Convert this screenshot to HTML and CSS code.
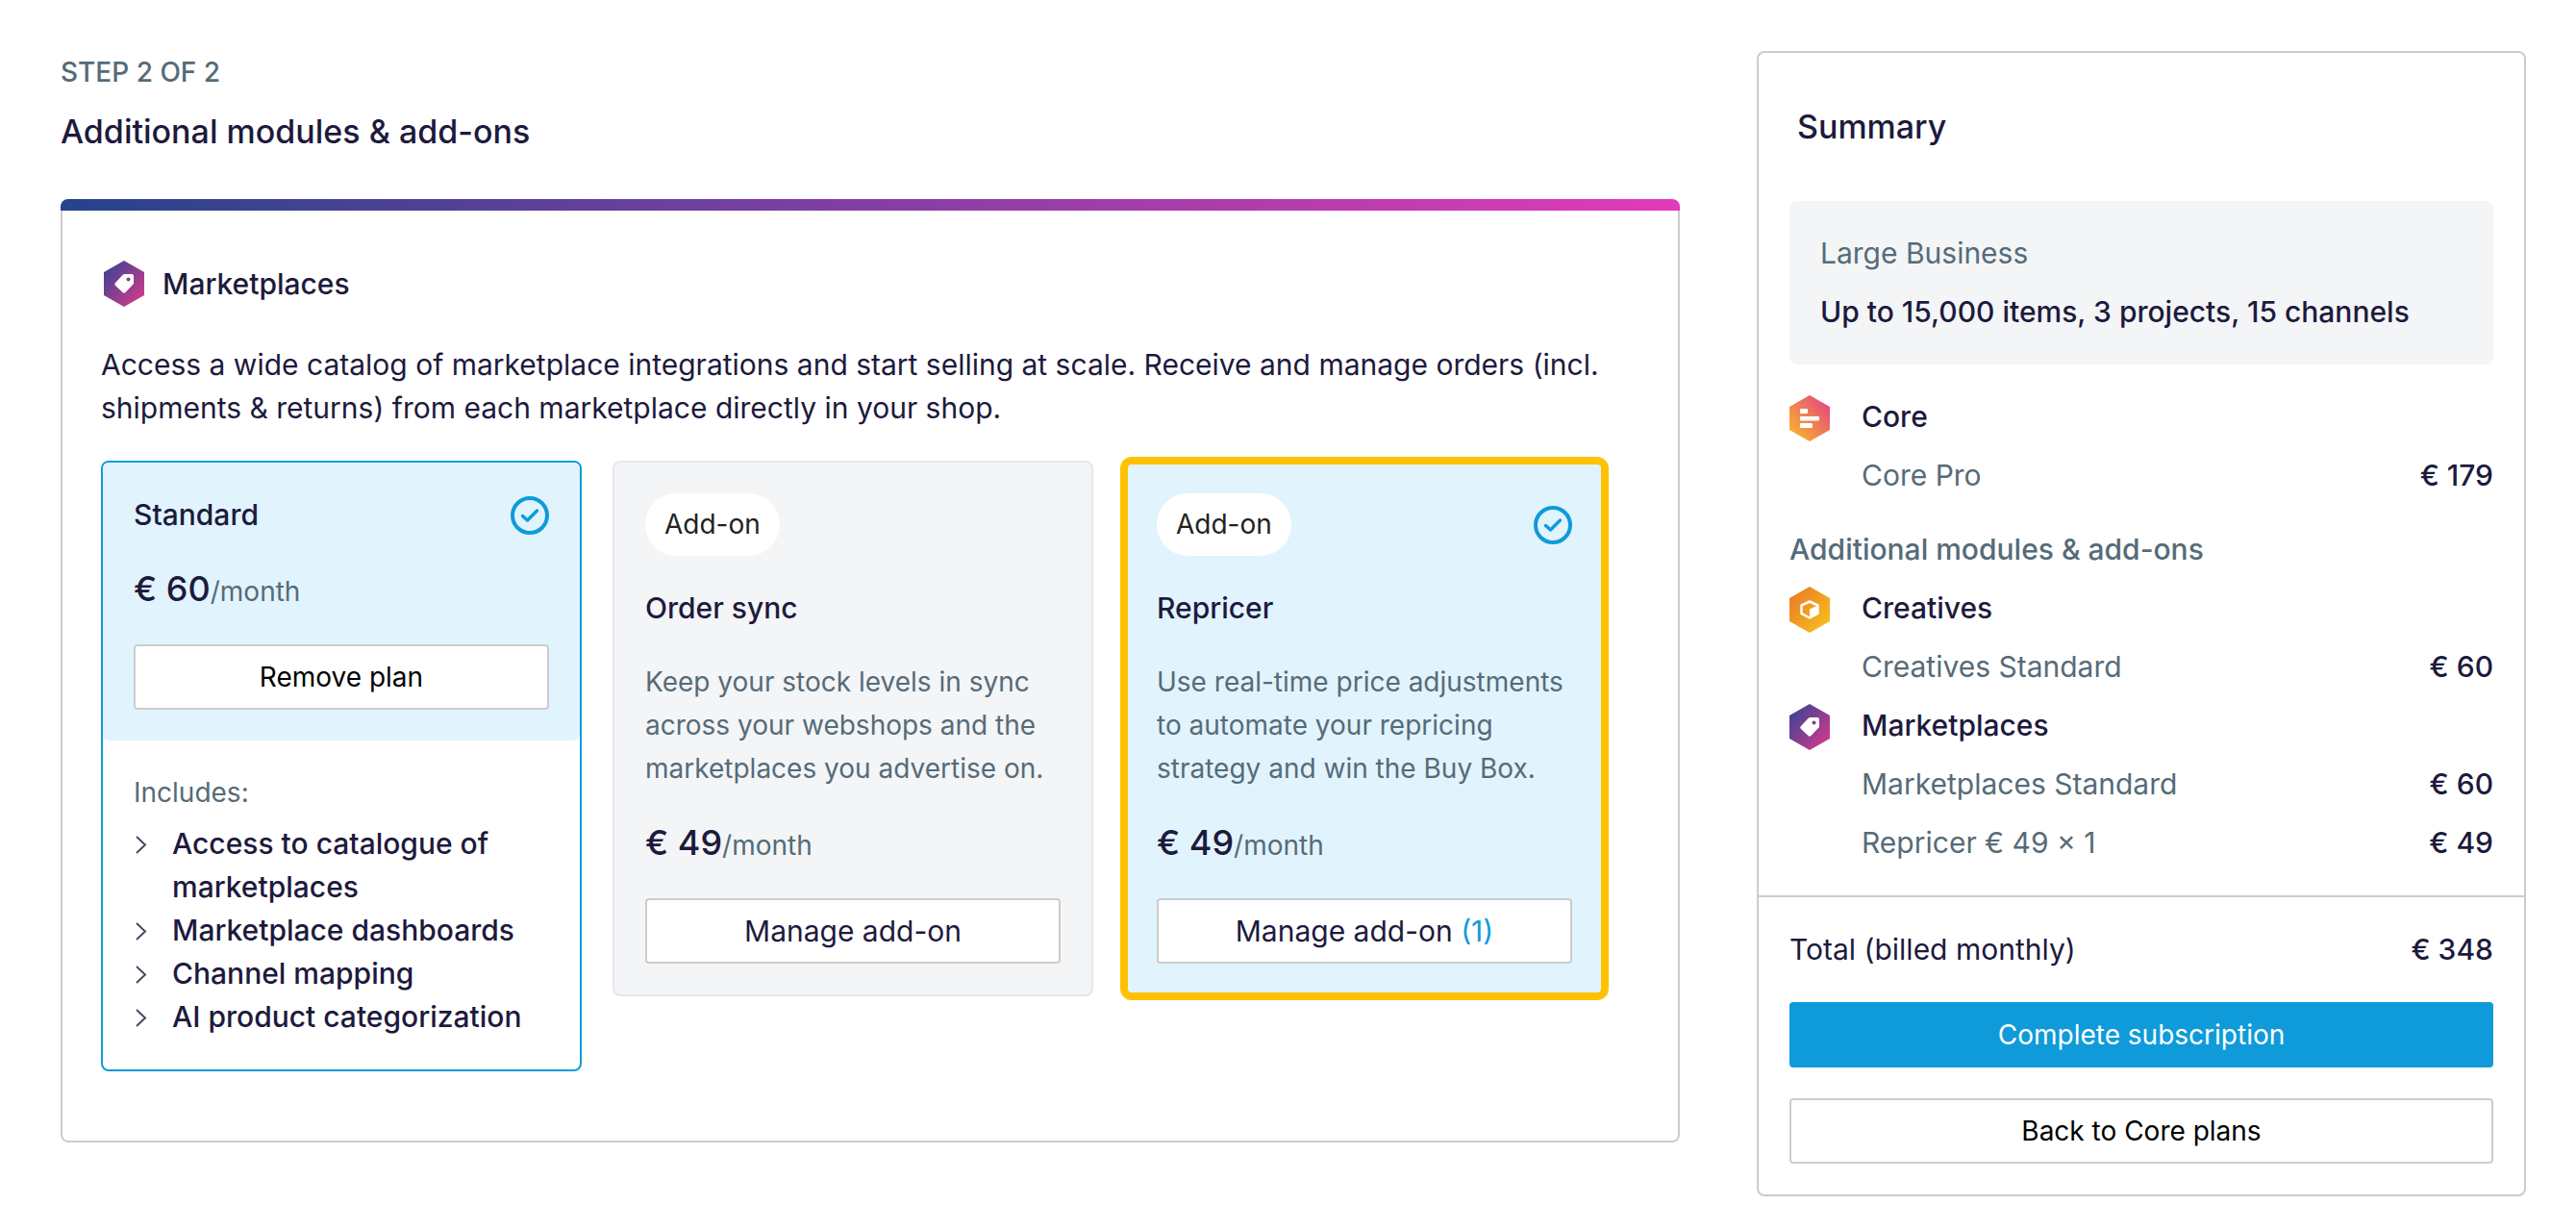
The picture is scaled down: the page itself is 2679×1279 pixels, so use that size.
FILE: index.html
```
<!DOCTYPE html>
<html lang="en">

<head>
    <meta charset="UTF-8">
    <meta name="viewport" content="width=device-width, initial-scale=1.0">
    <title>Additional modules &amp; add-ons</title>
    <link rel="stylesheet" href="styles.css">
</head>

<body>
    <!-- shared icons -->
    <svg class="sprite" width="0" height="0" aria-hidden="true">
        <defs>
            <linearGradient id="grad-core" x1="0" y1="1" x2="1" y2="0">
                <stop offset="0.1" stop-color="#f7b32c" />
                <stop offset="0.9" stop-color="#e6487f" />
            </linearGradient>
            <linearGradient id="grad-creatives" x1="0" y1="0" x2="1" y2="1">
                <stop offset="0.1" stop-color="#ea7d26" />
                <stop offset="0.9" stop-color="#f8bd1e" />
            </linearGradient>
            <linearGradient id="grad-market" x1="0" y1="0" x2="1" y2="1">
                <stop offset="0.1" stop-color="#3f4394" />
                <stop offset="0.9" stop-color="#d03a8b" />
            </linearGradient>
        </defs>
        <symbol id="icon-core" viewBox="0 0 42 48">
            <path d="M21 0L42 12V36L21 48L0 36V12Z" fill="url(#grad-core)" />
            <rect x="11" y="14" width="8" height="5" rx="1" fill="#fff" />
            <rect x="11" y="22" width="20" height="4.500" rx="1" fill="#fff" />
            <rect x="11" y="29" width="13" height="5" rx="1" fill="#fff" />
        </symbol>
        <symbol id="icon-creatives" viewBox="0 0 42 48">
            <path d="M21 0L42 12V36L21 48L0 36V12Z" fill="url(#grad-creatives)" />
            <path d="M21 15.500L29.500 19.500V28L21 32.500L12.500 28V19.500Z" fill="none" stroke="#fff" stroke-width="2.500" stroke-linejoin="round" />
            <path d="M21 23.500L29.500 19.500V28L21 32Z" fill="#fff" />
        </symbol>
        <symbol id="icon-market" viewBox="0 0 42 48">
            <path d="M21 0L42 12V36L21 48L0 36V12Z" fill="url(#grad-market)" />
            <path d="M22 14H29Q31 14 31 16V24L22.500 33Q21 34.500 19.500 33L12 26Q10.500 24.500 12 23L19.500 15Q20.500 14 22 14Z" fill="#fff" />
            <circle cx="25.500" cy="19.500" r="2" fill="#7d3f90" />
        </symbol>
        <symbol id="icon-check" viewBox="0 0 40 40">
            <circle cx="20" cy="20" r="18" fill="none" stroke="#0f9bda" stroke-width="4" />
            <path d="M12.500 20.500L17.500 25L27.500 15" fill="none" stroke="#0f9bda" stroke-width="3.500" stroke-linecap="round" stroke-linejoin="round" />
        </symbol>
        <symbol id="icon-chevron" viewBox="0 0 14 45">
            <path d="M3 15L12 23.500L3 32" fill="none" stroke="#4b4863" stroke-width="2" />
        </symbol>
    </svg>

    <div class="page">
        <main>
            <p class="step">STEP 2 OF 2</p>
            <h1>Additional modules &amp; add-ons</h1>

            <section class="module">
                <div class="module-head">
                    <svg class="hex"><use href="#icon-market" /></svg>
                    <h2>Marketplaces</h2>
                </div>
                <p>Access a wide catalog of marketplace integrations and start selling at scale. Receive and manage orders (incl. shipments &amp; returns) from each marketplace directly in your shop.</p>

                <div class="plans">
                    <article class="plan selected">
                        <div class="plan-top">
                            <div class="plan-row">
                                <h3>Standard</h3>
                                <svg class="check"><use href="#icon-check" /></svg>
                            </div>
                            <p class="price"><strong>€ 60</strong>/month</p>
                            <button type="button" class="btn">Remove plan</button>
                        </div>
                        <div class="includes">
                            <p>Includes:</p>
                            <ul>
                                <li><svg class="chevron"><use href="#icon-chevron" /></svg>Access to catalogue of marketplaces</li>
                                <li><svg class="chevron"><use href="#icon-chevron" /></svg>Marketplace dashboards</li>
                                <li><svg class="chevron"><use href="#icon-chevron" /></svg>Channel mapping</li>
                                <li><svg class="chevron"><use href="#icon-chevron" /></svg>AI product categorization</li>
                            </ul>
                        </div>
                    </article>

                    <article class="plan addon">
                        <div class="plan-row">
                            <span class="tag">Add-on</span>
                        </div>
                        <h3>Order sync</h3>
                        <p class="description">Keep your stock levels in sync across your webshops and the marketplaces you advertise on.</p>
                        <p class="price"><strong>€ 49</strong>/month</p>
                        <button type="button" class="btn btn-large">Manage add-on</button>
                    </article>

                    <article class="plan addon highlighted">
                        <div class="plan-row">
                            <span class="tag">Add-on</span>
                            <svg class="check"><use href="#icon-check" /></svg>
                        </div>
                        <h3>Repricer</h3>
                        <p class="description">Use real-time price adjustments to automate your repricing strategy and win the Buy Box.</p>
                        <p class="price"><strong>€ 49</strong>/month</p>
                        <button type="button" class="btn btn-large">Manage add-on <span class="count">(1)</span></button>
                    </article>
                </div>
            </section>
        </main>

        <aside class="summary">
            <h2>Summary</h2>
            <div class="summary-body">
                <div class="business">
                    <p>Large Business</p>
                    <p class="limits">Up to 15,000 items, 3 projects, 15 channels</p>
                </div>
                <div class="group">
                    <div class="line line-title"><svg class="hex"><use href="#icon-core" /></svg><span>Core</span></div>
                    <div class="line"><span>Core Pro</span><strong>€ 179</strong></div>
                </div>
                <div class="group">
                    <h3>Additional modules &amp; add-ons</h3>
                    <div class="line line-title"><svg class="hex"><use href="#icon-creatives" /></svg><span>Creatives</span></div>
                    <div class="line"><span>Creatives Standard</span><strong>€ 60</strong></div>
                    <div class="line line-title"><svg class="hex"><use href="#icon-market" /></svg><span>Marketplaces</span></div>
                    <div class="line"><span>Marketplaces Standard</span><strong>€ 60</strong></div>
                    <div class="line"><span>Repricer € 49 × 1</span><strong>€ 49</strong></div>
                </div>
            </div>
            <div class="summary-footer">
                <div class="total"><span>Total (billed monthly)</span><strong>€ 348</strong></div>
                <button type="button" class="btn btn-primary">Complete subscription</button>
                <button type="button" class="btn">Back to Core plans</button>
            </div>
        </aside>
    </div>
</body>

</html>
```
FILE: styles.css
```
* {
    box-sizing: border-box;
}

body {
    font-family: Inter, "Liberation Sans", sans-serif;
    font-size: 30px;
    line-height: 45px;
    color: #1d1a3d;
    background-color: #fff;
    margin: 0;
}

h1,
h2,
h3,
p,
ul {
    margin: 0;
    padding: 0;
}

h1,
h2,
h3,
strong {
    font-size: 30px;
    font-weight: 500;
}

.sprite {
    position: absolute;
}

.page {
    display: grid;
    grid-template-columns: minmax(0, 1fr) 800px;
    align-items: start;
    gap: 80px;
    padding: 53px 52px 35px 63px;
}

.step {
    font-size: 28px;
    font-weight: 500;
    color: #566b78;
}

h1 {
    font-size: 34px;
    line-height: 48px;
    margin: 15px 0 46px;
}

/* Module card */
.module {
    border: 2px solid #ccc;
    border-top: 0;
    border-radius: 8px;
    padding: 0 40px 72px;
}

.module::before {
    content: "";
    display: block;
    height: 12px;
    margin: 0 -42px 52px;
    border-radius: 8px 8px 0 0;
    background: linear-gradient(90deg, #25438c, #e23bb8);
}

.module-head {
    display: flex;
    align-items: center;
    gap: 19px;
    padding-left: 3px;
    margin-bottom: 38px;
}

.hex {
    flex: none;
    width: 42px;
    height: 48px;
}

.check {
    flex: none;
    width: 40px;
    height: 40px;
}

.plans {
    display: grid;
    grid-template-columns: repeat(3, minmax(0, 1fr));
    align-items: start;
    gap: 32px;
    padding-right: 36px;
    margin-top: 32px;
}

.plan {
    border: 2px solid #e6e7ee;
    border-radius: 8px;
}

.selected {
    border-color: #0f9bda;
}

.plan-top {
    background-color: #e1f4fe;
    border-radius: 6px;
    padding: 32px;
}

.plan-row {
    display: flex;
    align-items: center;
    justify-content: space-between;
}

.price {
    font-size: 28px;
    line-height: 48px;
    color: #566b78;
    margin: 32px 0 31px;
}

.price strong {
    font-size: 36px;
    line-height: 45px;
    color: #1d1a3d;
}

.btn {
    display: block;
    width: 100%;
    height: 68px;
    font-family: inherit;
    font-size: 28px;
    color: #000;
    background-color: #fff;
    border: 2px solid #ccc;
    border-radius: 4px;
    padding: 0;
    cursor: pointer;
}

.btn-large {
    font-size: 30px;
    color: #1d1a3d;
}

.btn-primary {
    color: #fff;
    background-color: #0f9bda;
    border-color: #0f9bda;
}

.count {
    color: #0f9bda;
}

.includes {
    padding: 32px;
}

.includes p {
    font-size: 28px;
    color: #566b78;
    margin-bottom: 8px;
}

.includes ul {
    list-style: none;
    font-weight: 500;
}

.includes li {
    display: flex;
    gap: 26px;
}

.chevron {
    flex: none;
    width: 14px;
    height: 45px;
}

.addon {
    background-color: #f3f5f7;
    padding: 32px;
}

.addon h3 {
    margin: 32px 0;
}

.highlighted {
    background-color: #e1f4fe;
    outline: 8px solid #ffc200;
    outline-offset: -4px;
}

.tag {
    font-size: 28px;
    color: #222;
    background-color: #fff;
    border-radius: 33px;
    padding: 10px 20px;
}

.description {
    font-size: 28px;
    color: #566b78;
}

/* Summary */
.summary {
    border: 2px solid #ccc;
    border-radius: 8px;
}

.summary h2 {
    font-size: 34px;
    line-height: 48px;
    padding: 53px 40px;
}

.summary-body {
    display: flex;
    flex-direction: column;
    gap: 32px;
    padding: 0 32px 32px;
}

.business {
    background-color: #f3f5f7;
    border-radius: 8px;
    color: #566b78;
    padding: 32px;
}

.limits {
    font-weight: 500;
    color: #1d1a3d;
    margin-top: 16px;
}

.group {
    display: flex;
    flex-direction: column;
    gap: 16px;
}

.group h3 {
    color: #566b78;
}

.line {
    display: flex;
    justify-content: space-between;
    height: 45px;
    padding-left: 75px;
    color: #566b78;
}

.line strong {
    color: #1d1a3d;
}

.line-title {
    justify-content: flex-start;
    gap: 33px;
    padding-left: 0;
    color: #1d1a3d;
    font-weight: 500;
}

.summary-footer {
    display: flex;
    flex-direction: column;
    gap: 32px;
    border-top: 2px solid #ccc;
    padding: 32px;
}

.total {
    display: flex;
    justify-content: space-between;
}
```
